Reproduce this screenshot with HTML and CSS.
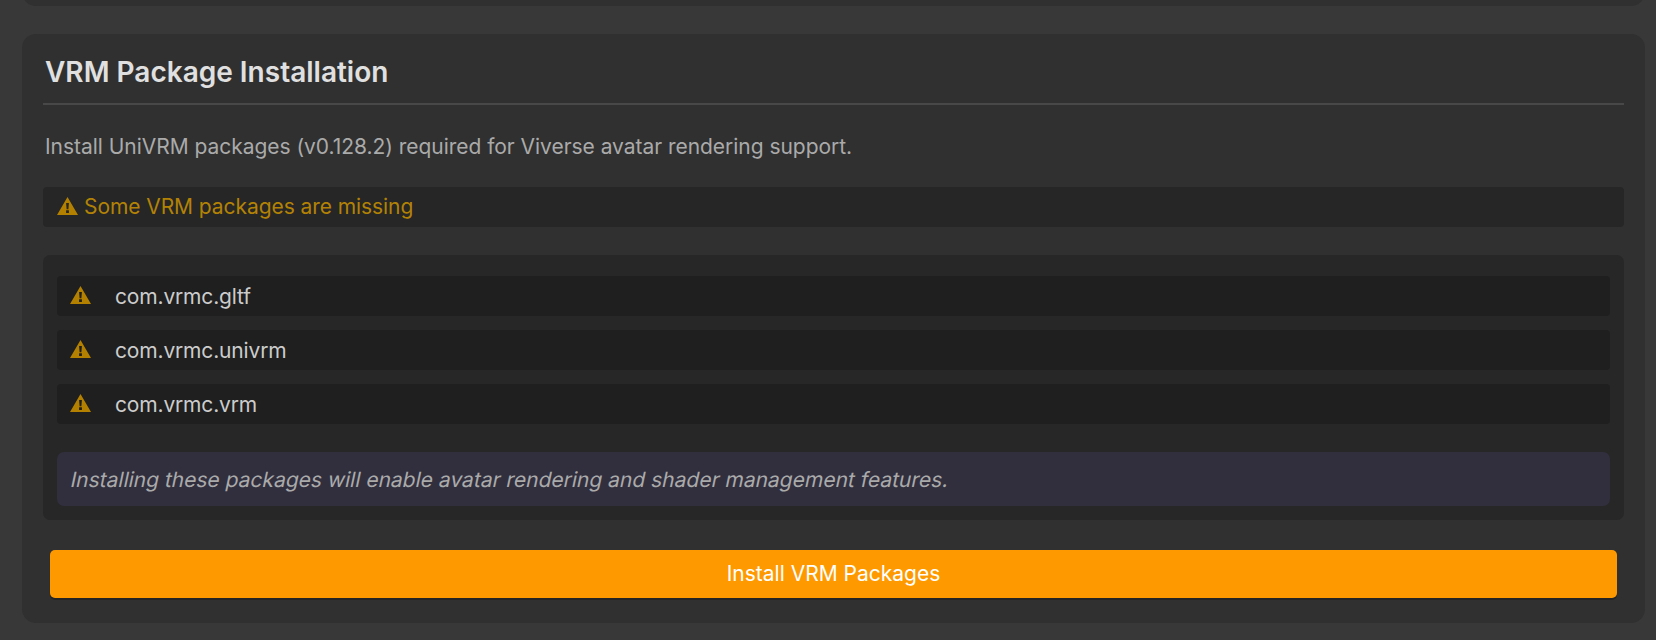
FILE: index.html
```html
<!DOCTYPE html>
<html lang="en">
<head>
<meta charset="utf-8">
<title>VRM Package Installation</title>
<link rel="stylesheet" href="styles.css">
</head>
<body>
<svg class="defs" width="0" height="0" aria-hidden="true">
  <symbol id="warning" viewBox="0 0 21 18">
    <path fill-rule="evenodd" d="M10.5 0 21 18H0ZM9.1 6L9.6 12.2H11.4L11.9 6ZM9.1 13.3V15.9H11.9V13.3Z"/>
  </symbol>
</svg>
<div class="window">
  <section class="card card-previous"></section>
  <section class="card card-main">
    <h2 class="card-title">VRM Package Installation</h2>
    <p class="description">Install UniVRM packages (v0.128.2) required for Viverse avatar rendering support.</p>
    <div class="status"><svg class="icon"><use href="#warning"/></svg><span class="status-text">Some VRM packages are missing</span></div>
    <div class="packages">
      <ul class="package-list">
        <li class="package"><svg class="icon"><use href="#warning"/></svg><span class="package-name">com.vrmc.gltf</span></li>
        <li class="package"><svg class="icon"><use href="#warning"/></svg><span class="package-name">com.vrmc.univrm</span></li>
        <li class="package"><svg class="icon"><use href="#warning"/></svg><span class="package-name">com.vrmc.vrm</span></li>
      </ul>
      <p class="note"><span class="slanted">Installing these packages will enable avatar rendering and shader management features.</span></p>
    </div>
    <button class="install">Install VRM Packages</button>
  </section>
</div>
</body>
</html>
```
FILE: styles.css
```css
* { box-sizing: border-box; }
html, body { margin: 0; height: 100%; }
body {
  overflow: hidden;
  background: #383838;
  font-family: Inter, "Liberation Sans", sans-serif;
  font-size: 21px;
  line-height: 27px;
}
.defs { display: block; width: 0; height: 0; }
.window {
  display: flex;
  flex-direction: column;
  gap: 28px;
  height: 640px;
  padding: 0 11px 0 22px;
}
.card { background: #303030; border-radius: 14px; }
.card-previous { height: 6px; flex: none; overflow: hidden; background: none; border-radius: 0; }
.card-previous::before {
  content: "";
  display: block;
  height: 60px;
  margin-top: -54px;
  border-radius: 14px;
  background: #303030;
}
.card-main {
  display: flex;
  flex-direction: column;
  flex: none;
  height: 589px;
  padding: 21px 21px 0;
}
.card-title {
  margin: 0;
  height: 50px;
  padding: 0 2px;
  border-bottom: 2px solid #484848;
  color: #e0e0e0;
  font-size: 28px;
  font-weight: 600;
  line-height: 34px;
}
.description { margin: 28px 0 0; padding: 0 2px; color: #aaa; letter-spacing: -0.035px; }
.status {
  display: flex;
  align-items: center;
  gap: 6px;
  height: 40px;
  margin-top: 27px;
  padding: 0 14px;
  border-radius: 4px;
  background: #262626;
  color: #b38205;
}
.status-text { padding-bottom: 1px; letter-spacing: -0.07px; }
.package-name { padding-top: 1px; letter-spacing: -0.16px; }
.icon { flex: none; width: 21px; height: 18px; margin-bottom: 2px; fill: #b38000; }
.packages {
  height: 265px;
  margin-top: 28px;
  padding: 21px 14px 14px;
  border-radius: 7px;
  background: #272727;
}
.package-list {
  display: flex;
  flex-direction: column;
  gap: 14px;
  margin: 0;
  padding: 0;
  list-style: none;
}
.package {
  display: flex;
  align-items: center;
  gap: 24px;
  height: 40px;
  padding: 0 13px;
  border-radius: 4px;
  background: #1f1f1f;
  color: #ccc;
}
.note {
  height: 54px;
  margin: 28px 0 0;
  padding: 14px 14px 0;
  border-radius: 7px;
  background: #312f3e;
  color: #aaa;
}
.slanted { display: inline-block; transform: skewX(-12deg); }
.install {
  height: 48px;
  margin: 30px 7px 0;
  padding: 0 0 1px;
  border: 0;
  border-radius: 5px;
  background: #ff9900;
  box-shadow: 0 2px 0 #242424;
  color: #fff;
  font: inherit;
}
```
